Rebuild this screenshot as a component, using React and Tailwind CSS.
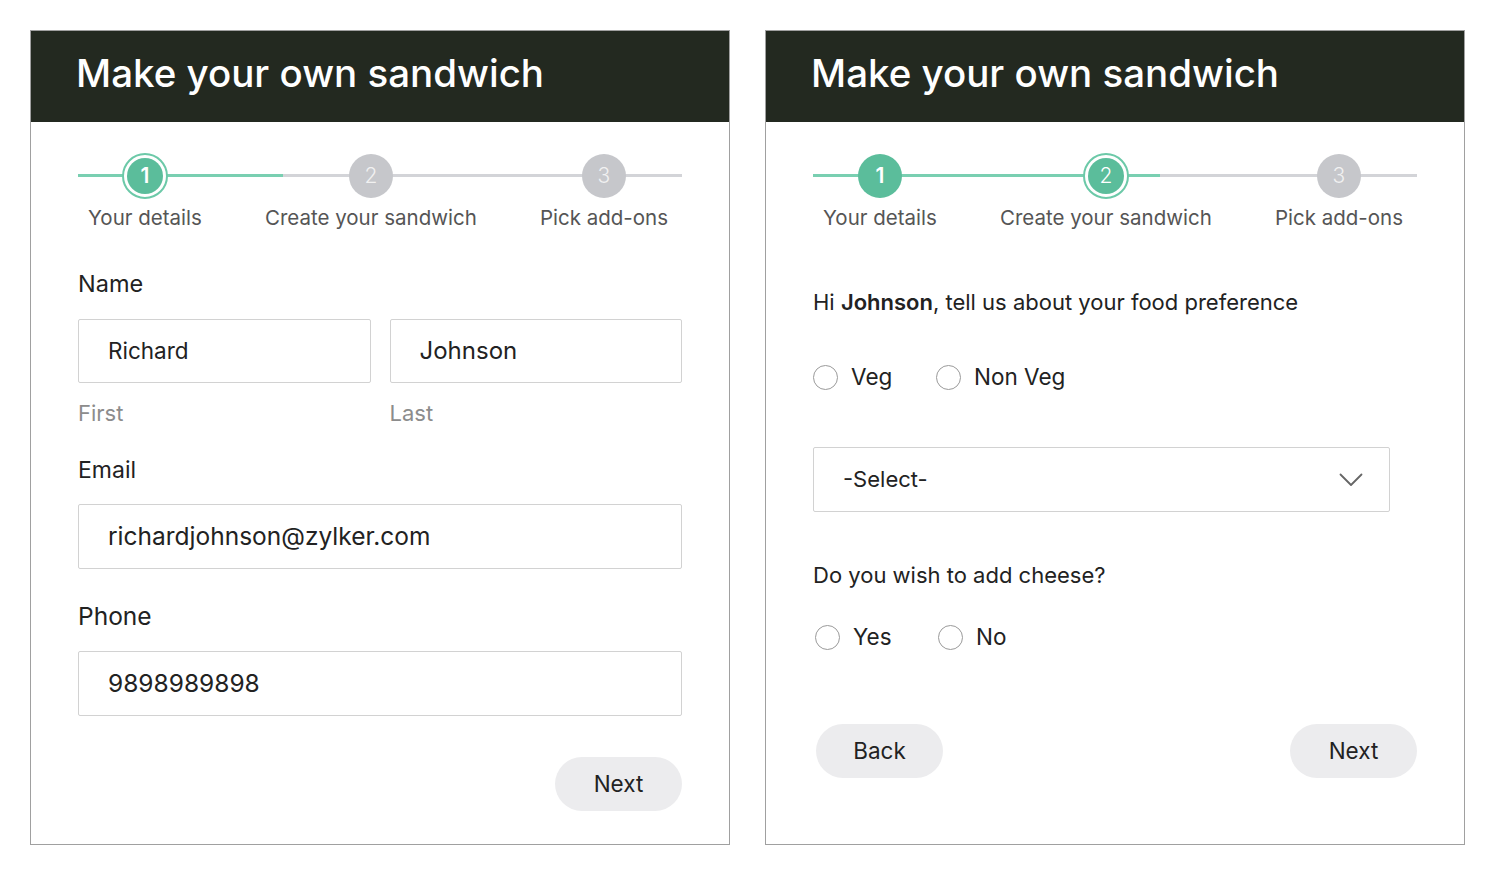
import React from "react";

const font = { fontFamily: "Inter, 'Noto Sans', sans-serif" };

const steps = ["Your details", "Create your sandwich", "Pick add-ons"];

const StepCircle = ({ n, state }) => {
  const weight = n === 1 ? "font-semibold" : "font-light";
  if (state === "active") {
    return (
      <div className="w-[46px] h-[46px] rounded-full border-2 border-[#6cc9a8] bg-white flex items-center justify-center">
        <div
          className={`w-[36px] h-[36px] rounded-full bg-[#5bbd9b] flex items-center justify-center text-white text-[21px] ${weight}`}
        >
          {n}
        </div>
      </div>
    );
  }
  if (state === "done") {
    return (
      <div className="w-[44px] h-[44px] rounded-full bg-[#5bbd9b] flex items-center justify-center text-white text-[21px] font-semibold">
        {n}
      </div>
    );
  }
  return (
    <div className="w-[44px] h-[44px] rounded-full bg-[#c6c7cb] flex items-center justify-center text-[#f1f1f1] text-[21px] font-light">
      {n}
    </div>
  );
};

const Stepper = ({ current, teal }) => (
  <div className="relative">
    <div className="absolute top-[21px] left-0 right-0 h-[3px] bg-[#d3d4d8]" />
    <div
      className="absolute top-[21px] left-0 h-[3px] bg-[#79cfb1]"
      style={{ width: teal }}
    />
    <div className="relative flex justify-between pl-[10px] pr-[14px]">
      {steps.map((label, i) => {
        const n = i + 1;
        const state = n === current ? "active" : n < current ? "done" : "todo";
        return (
          <div key={label} className="flex flex-col items-center">
            <div className="h-[46px] flex items-center">
              <StepCircle n={n} state={state} />
            </div>
            <div className="mt-[7px] text-[20.5px] leading-[24px] text-[#555] whitespace-nowrap">
              {label}
            </div>
          </div>
        );
      })}
    </div>
  </div>
);

const Card = ({ children }) => (
  <div className="w-[700px] h-[815px] border-[1.5px] border-[#a0a0a0] bg-white flex flex-col">
    <div className="h-[91px] bg-[#232920] px-[45px] pb-[5px] flex items-center shrink-0">
      <h1 className="text-white text-[38.5px] font-medium">
        Make your own sandwich
      </h1>
    </div>
    <div className="px-[47px] pt-[31px] flex flex-col">{children}</div>
  </div>
);

const TextBox = ({ value, className = "" }) => (
  <div
    className={`border border-[#d2d2d2] rounded-[2px] flex items-center px-[29px] text-[#222] ${className}`}
  >
    {value}
  </div>
);

const Radio = ({ label }) => (
  <div className="w-[123px] shrink-0 flex items-center gap-[13px] whitespace-nowrap">
    <span className="w-[25px] h-[25px] shrink-0 rounded-full border-[1.5px] border-[#9a9a9a] bg-white" />
    <span className="text-[22.5px] text-[#222]">{label}</span>
  </div>
);

const Pill = ({ children }) => (
  <button className="w-[127px] h-[54px] rounded-full bg-[#ececee] text-[22.5px] text-[#222] flex items-center justify-center">
    {children}
  </button>
);

const Chevron = () => (
  <svg width="24" height="14" viewBox="0 0 24 14" fill="none">
    <polyline
      points="1.5,1.5 12,12 22.5,1.5"
      stroke="#666"
      strokeWidth="1.8"
      strokeLinecap="round"
      strokeLinejoin="round"
    />
  </svg>
);

const DetailsStep = () => (
  <Card>
    <Stepper current={1} teal="205px" />
    <div className="mt-[40px] text-[23.5px] leading-[28px] text-[#222]">Name</div>
    <div className="mt-[21px] flex gap-[19px]">
      <TextBox value="Richard" className="flex-1 h-[64px] text-[22.5px]" />
      <TextBox value="Johnson" className="flex-1 h-[64px] text-[24px]" />
    </div>
    <div className="mt-[18px] flex gap-[19px] text-[22px] leading-[24px] text-[#8c8c8c]">
      <div className="flex-1">First</div>
      <div className="flex-1">Last</div>
    </div>
    <div className="mt-[31px] text-[23px] leading-[28px] text-[#222]">Email</div>
    <TextBox
      value="richardjohnson@zylker.com"
      className="mt-[20px] h-[65px] text-[24.5px]"
    />
    <div className="mt-[33px] text-[24.5px] leading-[28px] text-[#222]">Phone</div>
    <TextBox value="9898989898" className="mt-[21px] h-[65px] text-[24.5px]" />
    <div className="mt-[41px] flex justify-end">
      <Pill>Next</Pill>
    </div>
  </Card>
);

const SandwichStep = () => (
  <Card>
    <Stepper current={2} teal="347px" />
    <div className="mt-[58px] text-[22px] leading-[28px] text-[#222]">
      Hi <span className="font-semibold">Johnson</span>, tell us about your food
      preference
    </div>
    <div className="mt-[47px] h-[28px] flex items-center">
      <Radio label="Veg" />
      <Radio label="Non Veg" />
    </div>
    <div className="mt-[56px] w-[577px] h-[65px] border border-[#d2d2d2] rounded-[2px] flex items-center justify-between pl-[29px] pr-[26px] text-[22px] text-[#222]">
      <span>-Select-</span>
      <Chevron />
    </div>
    <div className="mt-[49px] text-[22px] leading-[28px] text-[#222]">
      Do you wish to add cheese?
    </div>
    <div className="mt-[34px] h-[28px] flex items-center pl-[2px]">
      <Radio label="Yes" />
      <Radio label="No" />
    </div>
    <div className="mt-[73px] flex justify-between pl-[3px]">
      <Pill>Back</Pill>
      <Pill>Next</Pill>
    </div>
  </Card>
);

export default function App() {
  return (
    <div
      className="min-h-screen bg-white pt-[30px] pl-[30px] flex gap-[35px]"
      style={font}
    >
      <DetailsStep />
      <SandwichStep />
    </div>
  );
}
